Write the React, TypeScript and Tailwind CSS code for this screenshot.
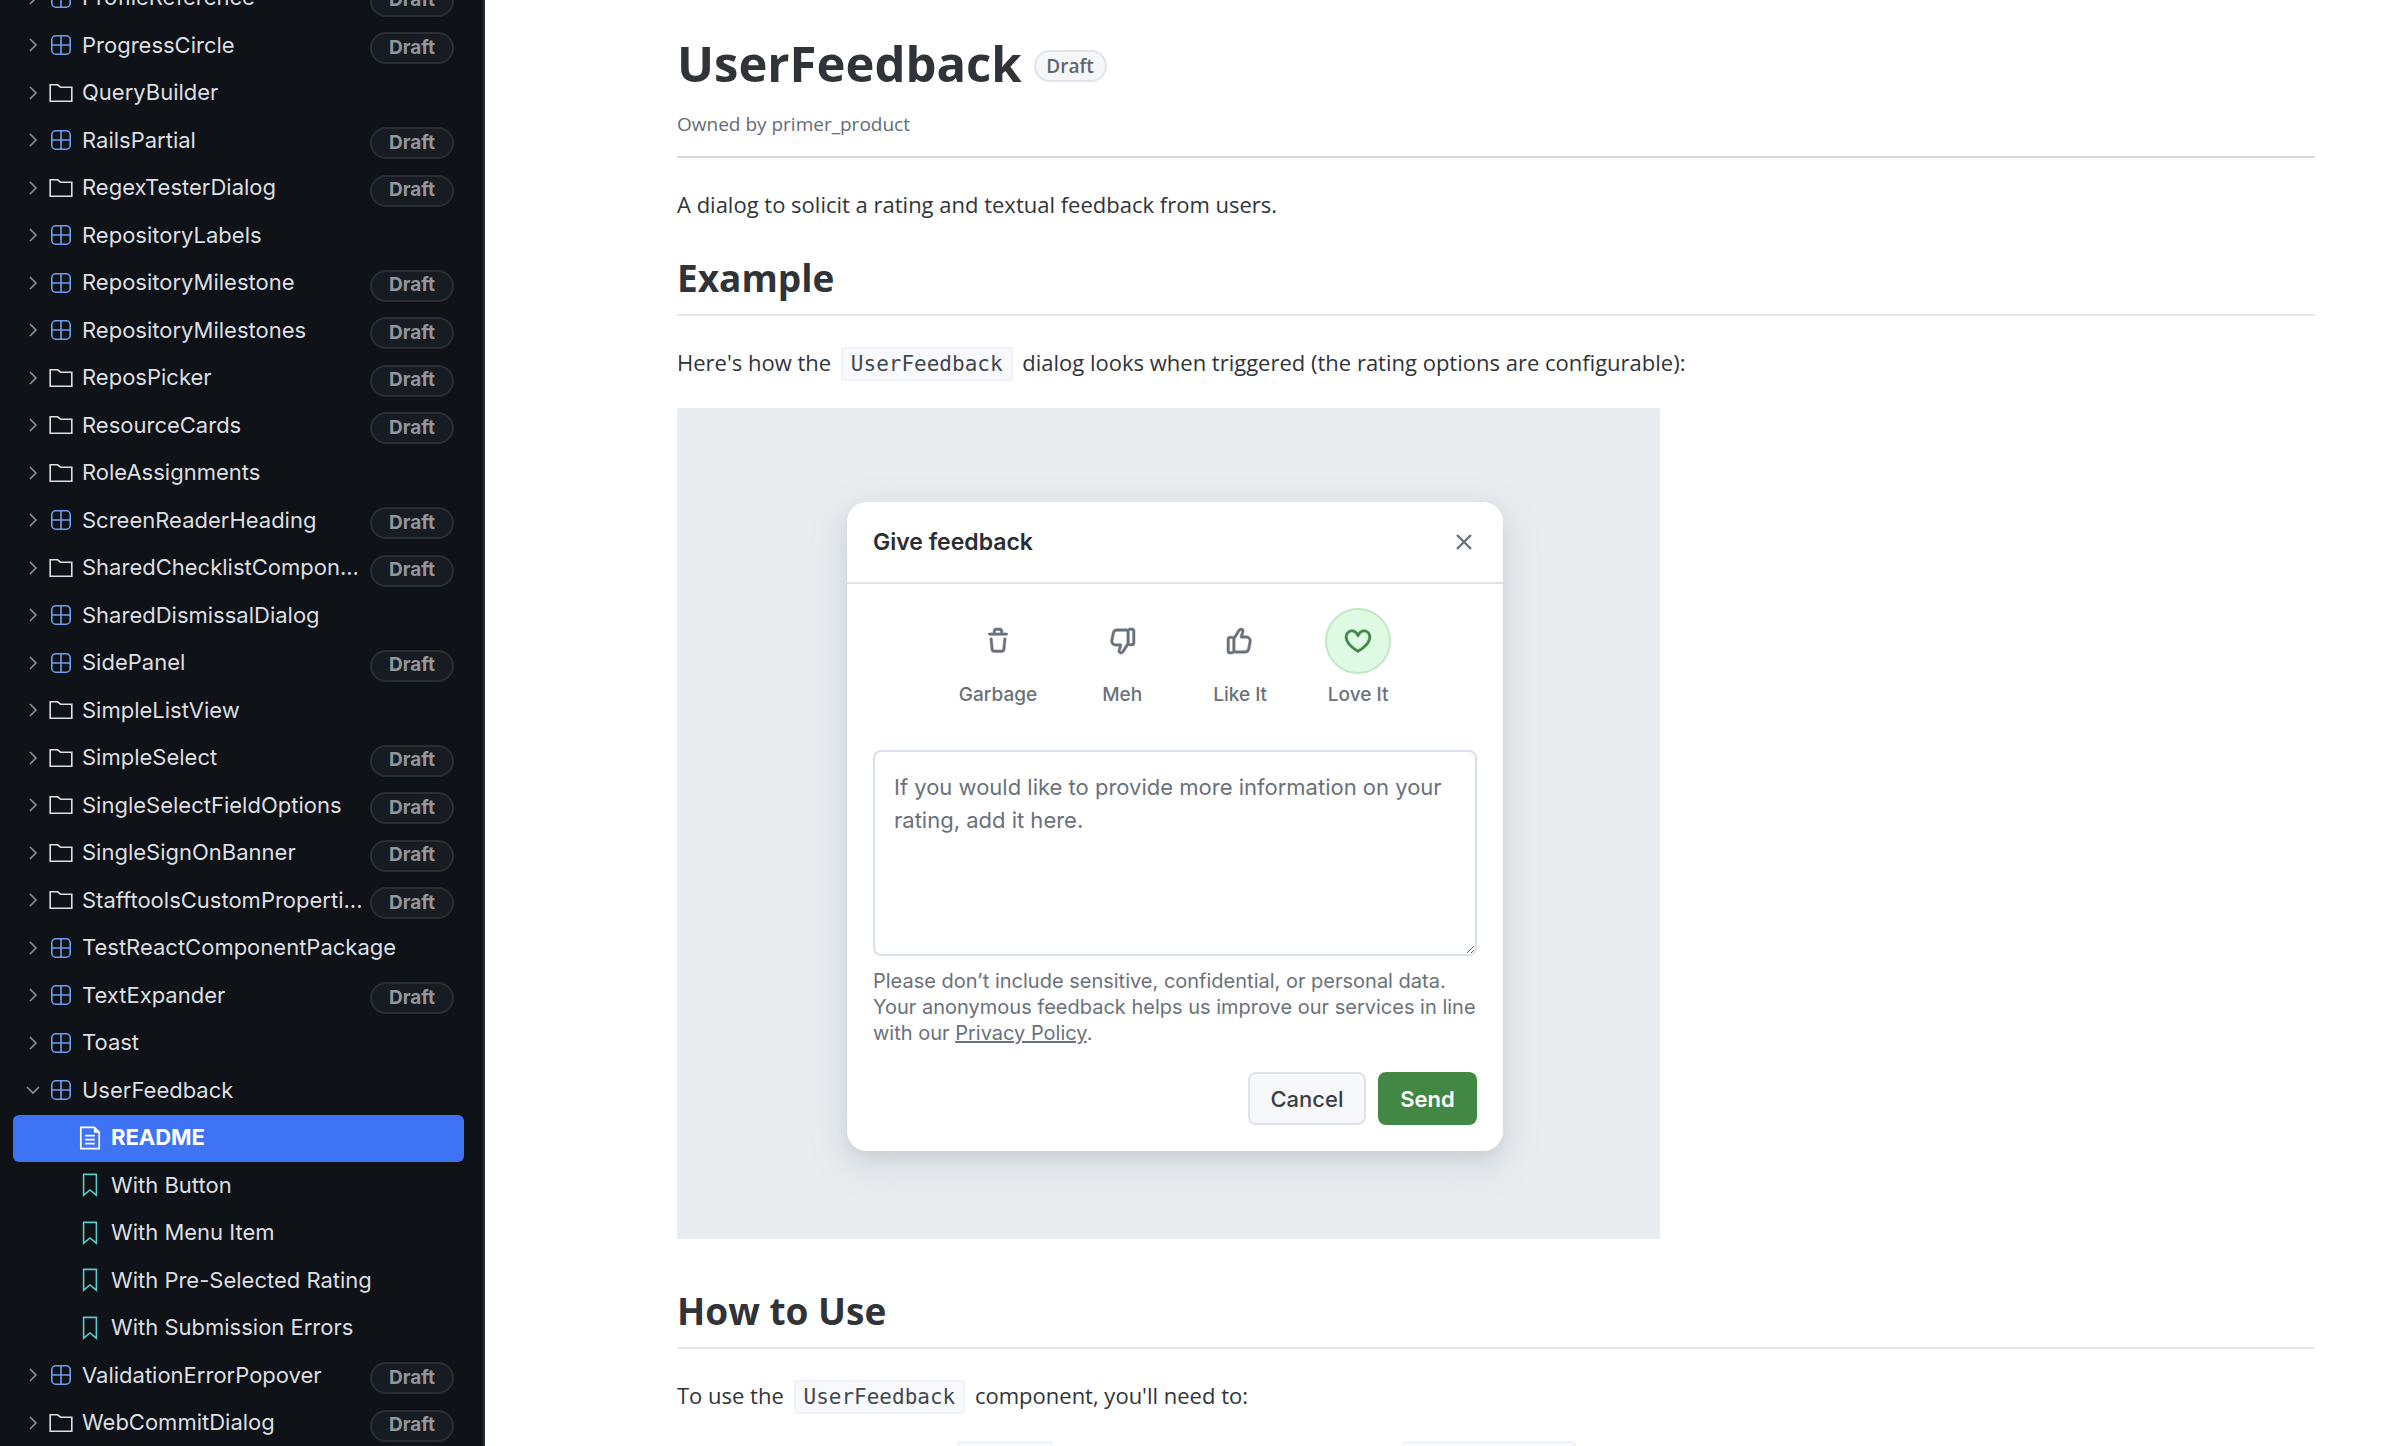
import { useState } from "react";
import clsx from "clsx";

type Kind = "component" | "group" | "document" | "story";

type Entry = {
  name: string;
  kind: Kind;
  draft?: boolean;
  open?: boolean;
};

const entries: Entry[] = [
  { name: "ProfileReference", kind: "component", draft: true },
  { name: "ProgressCircle", kind: "component", draft: true },
  { name: "QueryBuilder", kind: "group" },
  { name: "RailsPartial", kind: "component", draft: true },
  { name: "RegexTesterDialog", kind: "group", draft: true },
  { name: "RepositoryLabels", kind: "component" },
  { name: "RepositoryMilestone", kind: "component", draft: true },
  { name: "RepositoryMilestones", kind: "component", draft: true },
  { name: "ReposPicker", kind: "group", draft: true },
  { name: "ResourceCards", kind: "group", draft: true },
  { name: "RoleAssignments", kind: "group" },
  { name: "ScreenReaderHeading", kind: "component", draft: true },
  { name: "SharedChecklistCompon...", kind: "group", draft: true },
  { name: "SharedDismissalDialog", kind: "component" },
  { name: "SidePanel", kind: "component", draft: true },
  { name: "SimpleListView", kind: "group" },
  { name: "SimpleSelect", kind: "group", draft: true },
  { name: "SingleSelectFieldOptions", kind: "group", draft: true },
  { name: "SingleSignOnBanner", kind: "group", draft: true },
  { name: "StafftoolsCustomProperti...", kind: "group", draft: true },
  { name: "TestReactComponentPackage", kind: "component" },
  { name: "TextExpander", kind: "component", draft: true },
  { name: "Toast", kind: "component" },
  { name: "UserFeedback", kind: "component", open: true },
  { name: "README", kind: "document" },
  { name: "With Button", kind: "story" },
  { name: "With Menu Item", kind: "story" },
  { name: "With Pre-Selected Rating", kind: "story" },
  { name: "With Submission Errors", kind: "story" },
  { name: "ValidationErrorPopover", kind: "component", draft: true },
  { name: "WebCommitDialog", kind: "group", draft: true },
];

function Chevron({ open }: { open?: boolean }) {
  return (
    <svg viewBox="0 0 16 16" className="size-4 shrink-0" fill="none" stroke="#8d9096" strokeWidth="1.6">
      <path d={open ? "M2 5l6 6 6-6" : "M5 2l6 6-6 6"} />
    </svg>
  );
}

function KindIcon({ kind }: { kind: Kind }) {
  if (kind === "component") {
    return (
      <svg viewBox="0 0 24 24" className="size-6 shrink-0" fill="none" stroke="#6e9ff5" strokeWidth="1.6">
        <rect x="2.8" y="2.8" width="18.4" height="18.4" rx="4" />
        <path d="M12 3v18M3 12h18" />
      </svg>
    );
  }
  if (kind === "group") {
    return (
      <svg viewBox="0 0 24 24" className="size-6 shrink-0" fill="none" stroke="#dcdfe3" strokeWidth="1.6">
        <path d="M1.2 20.2V3.8h7.4l3 2.4h11.2v14z" />
      </svg>
    );
  }
  if (kind === "document") {
    return (
      <svg viewBox="0 0 24 24" className="size-6 shrink-0" fill="none" stroke="#fff" strokeWidth="1.7">
        <path d="M2.8 1.4h13.4l5 5v16.2H2.8z" />
        <path d="M15.8.6v6.2H22z" fill="#fff" stroke="none" />
        <path d="M7.2 9.6h9.6M7.2 13.6h9.6M7.2 17.6h9.6" />
      </svg>
    );
  }
  return (
    <svg viewBox="0 0 24 24" className="size-6 shrink-0" fill="none" stroke="#5fc9c9" strokeWidth="1.6">
      <path d="M5.6 1.4h12.8v20.8L12 17l-6.4 5.2z" />
    </svg>
  );
}

function SidebarItem({ entry }: { entry: Entry }) {
  const nested = entry.kind === "document" || entry.kind === "story";
  const selected = entry.kind === "document";

  return (
    <li className="odd:h-[47px] even:h-12">
      <a
        href="#"
        className={clsx(
          "flex h-full items-center rounded-md pr-2.5 pb-0.5",
          nested ? "pl-[65px]" : "pl-3",
          selected ? "bg-[#3e73f5] font-bold text-white" : "text-[#dcdfe3]",
        )}
      >
        {!nested && <Chevron open={entry.open} />}
        <span className={clsx("flex min-w-0 items-center gap-[9px]", !nested && "pl-2")}>
          <KindIcon kind={entry.kind} />
          <span className="truncate">{entry.name}</span>
        </span>
        {entry.draft && (
          <span className="mt-1.5 ml-auto flex h-8 w-[84px] shrink-0 items-center justify-center rounded-full border-2 border-[#2a2e34] bg-[#171b22] text-[19px] font-bold text-[#93969b]">
            Draft
          </span>
        )}
      </a>
    </li>
  );
}

function Code({ children }: { children: string }) {
  return (
    <code className="mx-1 rounded-sm border-2 border-[#eff3f9] bg-[#f8f9fd] px-2 py-[3px] font-['DejaVu_Sans_Mono',monospace] text-[21px] leading-6 text-[#43474d]">
      {children}
    </code>
  );
}

function SectionHeading({ children }: { children: string }) {
  return <h2 className="border-b-2 border-[#e4e7ec] pb-2 text-[37px] leading-[56px] font-bold">{children}</h2>;
}

const ratings = [
  {
    label: "Garbage",
    path: "M11 1.75V3h2.25a.75.75 0 0 1 0 1.5H2.75a.75.75 0 0 1 0-1.5H5V1.75C5 .784 5.784 0 6.75 0h2.5C10.216 0 11 .784 11 1.75ZM4.496 6.675l.66 6.6a.25.25 0 0 0 .249.225h5.19a.25.25 0 0 0 .249-.225l.66-6.6a.75.75 0 0 1 1.492.149l-.66 6.6A1.748 1.748 0 0 1 10.595 15h-5.19a1.75 1.75 0 0 1-1.741-1.575l-.66-6.6a.75.75 0 1 1 1.492-.15ZM6.5 1.75V3h3V1.75a.25.25 0 0 0-.25-.25h-2.5a.25.25 0 0 0-.25.25Z",
  },
  {
    label: "Meh",
    path: "M7.083 15.986a1.75 1.75 0 0 1-1.575-2.213L6.22 11.2H4.05a3.1 3.1 0 0 1-3.04-3.7l.9-4.5A3.1 3.1 0 0 1 4.95.5h5.8c.3 0 .6.08.85.22A1.75 1.75 0 0 1 12.9 0h1.35C15.216 0 16 .784 16 1.75v7.5A1.75 1.75 0 0 1 14.25 11H12.9a1.75 1.75 0 0 1-.8-.2l-.35.2-2.5 3.9a2.2 2.2 0 0 1-2.167 1.086ZM12.5 1.75v7.5c0 .138.112.25.4.25h1.35a.25.25 0 0 0 .25-.25v-7.5a.25.25 0 0 0-.25-.25H12.9c-.288 0-.4.112-.4.25ZM11 9.3V2.2c0-.12-.1-.2-.25-.2h-5.8A1.6 1.6 0 0 0 3.38 3.3l-.9 4.5A1.6 1.6 0 0 0 4.05 9.7H7.2a.75.75 0 0 1 .72.95l-.97 3.52c-.04.16.05.3.2.32.33.04.65-.12.83-.4L10.6 9.8Z",
  },
  {
    label: "Like It",
    path: "M8.917.014a1.75 1.75 0 0 1 1.575 2.213L9.78 4.8h2.17a3.1 3.1 0 0 1 3.04 3.7l-.9 4.5a3.1 3.1 0 0 1-3.04 2.5h-5.8c-.3 0-.6-.08-.85-.22a1.75 1.75 0 0 1-1.3.72H1.75A1.75 1.75 0 0 1 0 14.25v-7.5C0 5.784.784 5 1.75 5H3.1c.29 0 .56.07.8.2l.35-.2 2.5-3.9A2.2 2.2 0 0 1 8.917.014ZM3.5 14.25v-7.5c0-.138-.112-.25-.4-.25H1.75a.25.25 0 0 0-.25.25v7.5c0 .138.112.25.25.25H3.1c.288 0 .4-.112.4-.25ZM5 6.7v7.1c0 .12.1.2.25.2h5.8a1.6 1.6 0 0 0 1.57-1.3l.9-4.5a1.6 1.6 0 0 0-1.57-1.9H8.8a.75.75 0 0 1-.72-.95l.97-3.52c.04-.16-.05-.3-.2-.32-.33-.04-.65.12-.83.4L5.4 6.2Z",
  },
  {
    label: "Love It",
    path: "m8 14.25.345.666a.75.75 0 0 1-.69 0l-.008-.004-.018-.01a7.152 7.152 0 0 1-.31-.17 22.055 22.055 0 0 1-3.434-2.414C2.045 10.731 0 8.35 0 5.5 0 2.836 2.086 1 4.25 1 5.797 1 7.153 1.802 8 3.02 8.847 1.802 10.203 1 11.75 1 13.914 1 16 2.836 16 5.5c0 2.85-2.045 5.231-3.885 6.818a22.066 22.066 0 0 1-3.744 2.584l-.018.01-.006.003h-.002ZM4.25 2.5c-1.336 0-2.75 1.164-2.75 3 0 2.15 1.58 4.144 3.365 5.682A20.58 20.58 0 0 0 8 13.393a20.58 20.58 0 0 0 3.135-2.211C12.92 9.644 14.5 7.65 14.5 5.5c0-1.836-1.414-3-2.75-3-1.05 0-2.1.7-2.7 1.9L8 5.8 6.95 4.4C6.35 3.2 5.3 2.5 4.25 2.5Z",
  },
];

function FeedbackDialog() {
  const [rating, setRating] = useState("Love It");

  return (
    <div
      role="dialog"
      aria-label="Give feedback"
      className="w-[656px] rounded-[20px] bg-white font-[Inter,sans-serif] text-[#6a717b] shadow-[0_12px_36px_4px_#8c959f26,0_8px_16px_#8c959f33]"
    >
      <div className="flex h-[82px] items-center justify-between border-b-2 border-[#dfe2e8] px-[26px]">
        <h3 className="text-[23px] font-semibold text-[#2a2d32]">Give feedback</h3>
        <button type="button" aria-label="Close" className="p-1">
          <svg viewBox="0 0 18 18" className="size-[18px]" fill="none" stroke="#6a717b" strokeWidth="2.4">
            <path d="M2 2l14 14M16 2L2 16" />
          </svg>
        </button>
      </div>

      <div className="px-[26px] pt-6 pb-[26px]">
        <fieldset className="flex justify-center gap-[52px]">
          <legend className="sr-only">Rating</legend>
          {ratings.map(({ label, path }) => {
            const checked = rating === label;
            return (
              <label key={label} className="flex min-w-[66px] flex-col items-center gap-2 text-[19px] leading-[26px] font-medium">
                <input
                  type="radio"
                  name="rating"
                  className="sr-only"
                  checked={checked}
                  onChange={() => setRating(label)}
                />
                <span
                  className={clsx(
                    "flex size-[66px] items-center justify-center rounded-full border-2",
                    checked ? "border-[#bfe8c4] bg-[#dffae3] text-[#448549]" : "border-transparent",
                  )}
                >
                  <svg
                    viewBox="0 0 16 16"
                    className="size-[26px] overflow-visible"
                    fill="currentColor"
                    stroke="currentColor"
                    strokeWidth="0.3"
                  >
                    <path d={path} />
                  </svg>
                </span>
                {label}
              </label>
            );
          })}
        </fieldset>

        <textarea
          aria-label="Feedback"
          placeholder="If you would like to provide more information on your rating, add it here."
          className="mt-[42px] block h-[206px] w-full rounded-lg border-2 border-[#dbe1e8] px-[19px] py-[19px] text-[22px] leading-[33px] placeholder:text-[#6a717b]"
        />

        <p className="mt-3 text-[20px] leading-[26px]">
          Please don’t include sensitive, confidential, or personal data. Your anonymous feedback helps us improve our
          services in line with our{" "}
          <a href="#" className="underline">
            Privacy Policy
          </a>
          .
        </p>

        <div className="mt-[26px] flex justify-end gap-3 text-[22px] font-medium">
          <button type="button" className="h-[53px] w-[118px] rounded-lg border-2 border-[#dfe2e9] bg-[#f7f8fa] text-[#3a3d42]">
            Cancel
          </button>
          <button type="button" className="h-[53px] w-[99px] rounded-lg bg-[#438745] font-semibold text-white">
            Send
          </button>
        </div>
      </div>
    </div>
  );
}

export default function App() {
  return (
    <div className="flex h-screen overflow-hidden bg-white">
      <nav className="w-[485px] shrink-0 overflow-hidden border-r-2 border-[#26292e] bg-[#0f1216] pr-[19px] pl-[13px] font-[Inter,sans-serif] text-[22px]">
        <ul className="-mt-[25px]">
          {entries.map((entry) => (
            <SidebarItem key={entry.name} entry={entry} />
          ))}
        </ul>
      </nav>

      <main className="min-w-0 flex-1 overflow-hidden pt-[30px] pr-[85px] pl-48 font-['Open_Sans',sans-serif] text-[22px] leading-9 text-[#303439]">
        <header className="border-b-2 border-[#d3d9df] pb-4">
          <div className="flex items-center gap-3">
            <h1 className="text-[49px] leading-[66px] font-bold">UserFeedback</h1>
            <span className="mt-1.5 flex h-8 w-[73px] items-center justify-center rounded-full border-2 border-[#dfe3e9] bg-[#f6f7f9] text-[19px] font-semibold text-[#5f6670]">
              Draft
            </span>
          </div>
          <p className="mt-3 text-[19px] leading-8 text-[#656c76]">Owned by primer_product</p>
        </header>

        <p className="mt-7">A dialog to solicit a rating and textual feedback from users.</p>

        <div className="mt-7">
          <SectionHeading>Example</SectionHeading>
        </div>
        <p className="mt-7">
          Here's how the <Code>UserFeedback</Code> dialog looks when triggered (the rating options are configurable):
        </p>

        <div className="mt-7 w-[983px] bg-[#e8ecef] pt-[94px] pb-[88px] pl-[170px]">
          <FeedbackDialog />
        </div>

        <div className="mt-11">
          <SectionHeading>How to Use</SectionHeading>
        </div>
        <p className="mt-7">
          To use the <Code>UserFeedback</Code> component, you'll need to:
        </p>
        <div className="mt-7 flex gap-[350px] pl-[280px]">
          <span className="h-9 w-[96px] rounded-sm border-2 border-[#eff3f9] bg-[#f8f9fd]" />
          <span className="h-9 w-[173px] rounded-sm border-2 border-[#eff3f9] bg-[#f8f9fd]" />
        </div>
      </main>
    </div>
  );
}
